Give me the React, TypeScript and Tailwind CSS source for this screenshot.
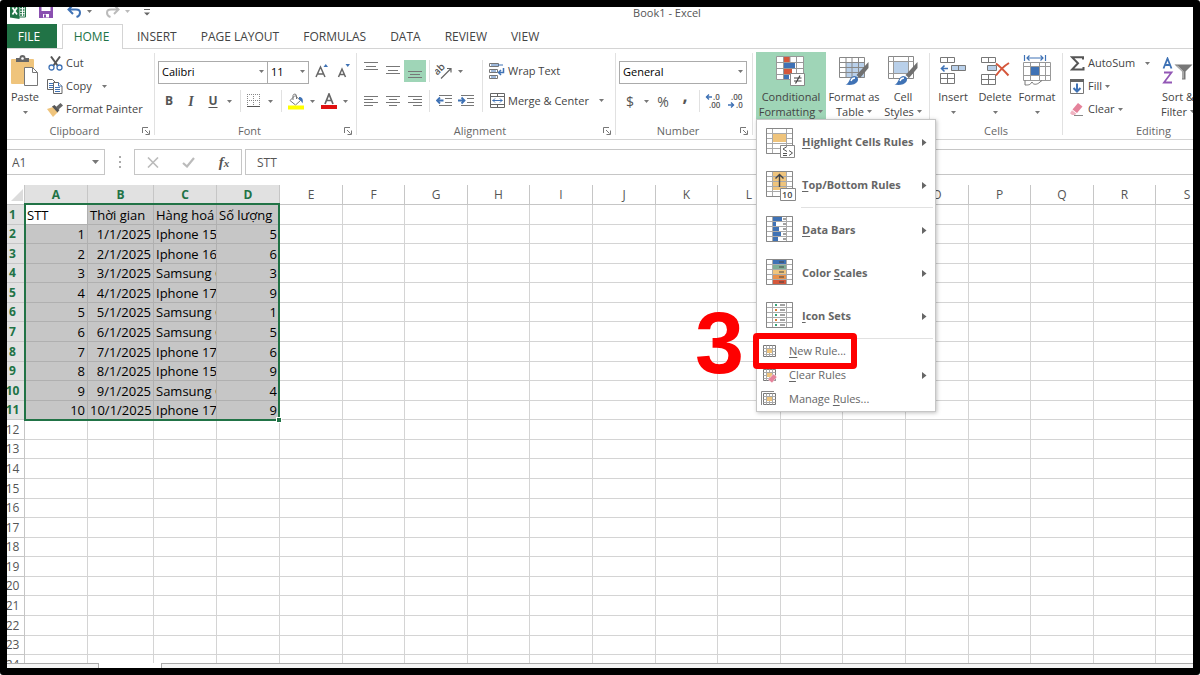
import type { ReactNode } from 'react';

type Children = { children: ReactNode };

const TABS = ['INSERT', 'PAGE LAYOUT', 'FORMULAS', 'DATA', 'REVIEW', 'VIEW'];

const COLUMNS = 'ABCDEFGHIJKLMNOPQRSTUVWXYZ'.split('');

const DATA: string[][] = [
  ['STT', 'Thời gian', 'Hàng hoá', 'Số lượng'],
  ['1', '1/1/2025', 'Iphone 15', '5'],
  ['2', '2/1/2025', 'Iphone 16', '6'],
  ['3', '3/1/2025', 'Samsung G', '3'],
  ['4', '4/1/2025', 'Iphone 17', '9'],
  ['5', '5/1/2025', 'Samsung G', '1'],
  ['6', '6/1/2025', 'Samsung G', '5'],
  ['7', '7/1/2025', 'Iphone 17', '6'],
  ['8', '8/1/2025', 'Iphone 15', '9'],
  ['9', '9/1/2025', 'Samsung G', '4'],
  ['10', '10/1/2025', 'Iphone 17', '9'],
];

const ROWS = Array.from({ length: 40 }, (_, i) => i);

function columnWidth(index: number) {
  if (index === 1) return 'w-[66px]';
  if (index < 4) return 'w-[63px]';
  return (index - 4) % 5 % 2 === 0 ? 'w-[63px]' : 'w-[62px]';
}

function rowHeight(index: number) {
  return index % 7 % 2 === 0 ? 'h-5' : 'h-[19px]';
}

/* ---------- small parts ---------- */

function Caret({ className = 'text-[#777]' }: { className?: string }) {
  return (
    <svg width="5" height="3" viewBox="0 0 5 3" className={`shrink-0 ${className}`} aria-hidden="true">
      <path d="M0 0h5L2.5 3z" fill="currentColor" />
    </svg>
  );
}

function CaretButton({ label, className = 'w-[11px]' }: { label: string; className?: string }) {
  return (
    <button type="button" aria-label={label} className={`flex h-[22px] shrink-0 items-center justify-center ${className}`}>
      <Caret />
    </button>
  );
}

function IconButton({ label, className = '', children }: Children & { label: string; className?: string }) {
  return (
    <button type="button" aria-label={label} className={`flex h-[22px] w-[22px] shrink-0 items-center justify-center ${className}`}>
      {children}
    </button>
  );
}

function Divider({ className = 'mx-[3px]' }: { className?: string }) {
  return <span className={`w-px shrink-0 self-stretch bg-[#e1e1e1] ${className}`} />;
}

function Group({ label, width, launcher, children }: Children & { label: string; width: string; launcher?: boolean }) {
  return (
    <section aria-label={label} className={`my-1 flex shrink-0 flex-col border-r border-[#e1e1e1] ${width}`}>
      <div className="flex h-[73px] shrink-0">{children}</div>
      <div className="flex h-[9px] items-center">
        <span className="flex-1 text-center text-[11px] leading-4 text-[#666]">{label}</span>
        {launcher && (
          <button type="button" aria-label={`${label} settings`} className="mr-1 w-2">
            <svg width="8" height="8" viewBox="0 0 8 8" fill="none" stroke="#777">
              <path d="M.5 6V.5H6M3 3l3.5 3.5M7.500 3.500v4h-4" />
            </svg>
          </button>
        )}
      </div>
    </section>
  );
}

function Combo({ label, value, width }: { label: string; value: string; width: string }) {
  return (
    <div className={`relative ${width}`}>
      <select aria-label={label} className="h-[23px] w-full appearance-none border border-[#ababab] bg-white pl-[3px] text-[11px] text-black">
        <option>{value}</option>
      </select>
      <span className="pointer-events-none absolute inset-y-0 right-1 flex items-center">
        <Caret />
      </span>
    </div>
  );
}

function BigButton({ icon, lines, caretBelow, className = '' }: { icon: ReactNode; lines: string[]; caretBelow?: boolean; className?: string }) {
  return (
    <button type="button" className={`-mt-px flex h-[69px] shrink-0 flex-col items-center text-[11px] leading-[15px] whitespace-nowrap ${className}`}>
      <span className="flex h-[37px] items-center">{icon}</span>
      {lines.map((line, i) => (
        <span key={line} className="flex items-center gap-[3px]">
          {line}
          {!caretBelow && i === lines.length - 1 && <Caret />}
        </span>
      ))}
      {caretBelow && (
        <span className="flex h-4 items-center">
          <Caret />
        </span>
      )}
    </button>
  );
}

function SmallButton({ icon, label, caret = '' }: { icon: ReactNode; label: string; caret?: string }) {
  return (
    <button type="button" className="flex h-[23px] items-center text-[11px] whitespace-nowrap">
      <span className="mr-[3px] flex w-4 justify-center">{icon}</span>
      {label}
      {caret && <Caret className={`text-[#777] ${caret}`} />}
    </button>
  );
}

/* ---------- ribbon icons ---------- */

function PasteIcon() {
  return (
    <svg width="30" height="32" viewBox="0 0 30 32">
      <rect x="1" y="4" width="23" height="25" rx="1" fill="#efc47c" />
      <path d="M6 3h3.500a3 3 0 0 1 6 0H19v4H6z" fill="#666" />
      <circle cx="12.500" cy="3.500" r="1.300" fill="#fff" />
      <path d="M14.500 12.500h8l5 5v13h-13z" fill="#fff" stroke="#777" />
      <path d="M22.500 12.500v5h5" fill="none" stroke="#777" />
    </svg>
  );
}

function CutIcon() {
  return (
    <svg width="15" height="15" viewBox="0 0 15 15" fill="none">
      <path d="M3 .5l6.500 9M12 .5l-6.500 9" stroke="#555" strokeWidth="2" />
      <circle cx="3.500" cy="11.500" r="2.500" stroke="#3f72b5" strokeWidth="1.300" />
      <circle cx="11.500" cy="11.500" r="2.500" stroke="#3f72b5" strokeWidth="1.300" />
    </svg>
  );
}

function CopyIcon() {
  return (
    <svg width="16" height="15" viewBox="0 0 16 15" fill="#fff" stroke="#666">
      <path d="M.5.5h5l3 3v7h-8z" />
      <path d="M2 4.500h4M2 6.500h4M2 8.500h4" stroke="#3f72b5" />
      <path d="M6.500 3.500h5l3.500 3.500v7.500H6.500z" />
      <path d="M11.500 3.500V7H15M8 8.500h5M8 10.500h5M8 12.500h5" stroke="#3f72b5" />
    </svg>
  );
}

function PainterIcon() {
  return (
    <svg width="16" height="14" viewBox="0 0 16 14">
      <path d="M0 6l6-2 5 5-5 5z" fill="#efc47c" />
      <path d="M5 3.500L7.500 2l5 5-2 2.500z" fill="#555" />
      <path d="M9 4l4.500-4L16 2.500 11.500 6.500z" fill="#666" />
    </svg>
  );
}

function GrowFontIcon({ small }: { small?: boolean }) {
  return (
    <svg width="14" height="16" viewBox="0 0 14 16">
      <path d={small ? 'M1.500 14L5 6l3.500 8M2.700 11.500h4.600' : 'M1 14L5.500 4 10 14M2.700 11h5.600'} fill="none" stroke="#666" strokeWidth="1.500" />
      <path d={small ? 'M8.500 1H13l-2.250 3z' : 'M8.500 4H13l-2.250-3z'} fill="#3f72b5" />
    </svg>
  );
}

function BordersIcon() {
  return (
    <svg width="14" height="14" viewBox="0 0 14 14" fill="none" stroke="#888">
      <path d="M.5 0v12M12.500 0v12M6.500 0v12M0 .5h13M0 6.500h13" strokeDasharray="1 1" />
      <path d="M0 12.500h13" stroke="#555" />
    </svg>
  );
}

function FillColorIcon() {
  return (
    <svg width="18" height="17" viewBox="0 0 18 17">
      <path d="M3 7.500L8 2.500l5.500 5-5 4.500z" fill="#fff" stroke="#777" />
      <path d="M6 7V2.500a1.800 1.800 0 0 1 3.500 0V6" fill="none" stroke="#777" />
      <path d="M12 4c3.500 0 4.500 2.500 3.500 6.500C14.500 8.500 14 7.500 12 6.500z" fill="#3f72b5" />
      <rect x="1" y="12.500" width="16" height="4" fill="#ffff00" />
    </svg>
  );
}

function FontColorIcon() {
  return (
    <svg width="16" height="16" viewBox="0 0 16 16">
      <path d="M4 11L8 1l4 10M5.300 7.500h5.400" fill="none" stroke="#666" strokeWidth="1.700" />
      <rect y="12" width="16" height="4" fill="#e01010" />
    </svg>
  );
}

const ALIGN_PATHS = {
  top: 'M0 2.500h14M2 6.500h10M0 9.500h14',
  middle: 'M0 6.500h14M2 10.500h10M0 13.500h14',
  bottom: 'M0 11.500h14M2 14.500h10M0 17.500h14',
  left: 'M0 6.500h14M0 9.500h9M0 12.500h14M0 15.500h9',
  center: 'M0 6.500h14M3 9.500h8M0 12.500h14M3 15.500h8',
  right: 'M0 6.500h14M5 9.500h9M0 12.500h14M5 15.500h9',
};

function AlignIcon({ kind }: { kind: keyof typeof ALIGN_PATHS }) {
  return (
    <svg width="14" height="22" viewBox="0 0 14 22" stroke="#777">
      <path d={ALIGN_PATHS[kind]} />
    </svg>
  );
}

function OrientationIcon() {
  return (
    <svg width="18" height="18" viewBox="0 0 18 18">
      <text x="1" y="11" transform="rotate(-45 5 11)" fontSize="10" fontWeight="600" fill="#555">ab</text>
      <path d="M6 16.500l10-10M12 6.500h4v4" fill="none" stroke="#666" strokeWidth="1.200" />
    </svg>
  );
}

function IndentIcon({ increase }: { increase?: boolean }) {
  return (
    <svg width="16" height="12" viewBox="0 0 16 12" fill="none">
      <path d="M3 .5h13M9 3.500h7M9 7.500h7M3 10.500h13" stroke="#777" />
      <path d={increase ? 'M0 5.500h6M3.500 2.500l3 3-3 3' : 'M1 5.500h6.500M4 2.500l-3 3 3 3'} stroke="#3f72b5" strokeWidth="1.800" />
    </svg>
  );
}

function WrapIcon() {
  return (
    <svg width="16" height="16" viewBox="0 0 16 16" fill="none">
      <path d="M.5.5h9v3h-9zM.5 6.500h8v3h-8zM.5 12.500h8v3h-8z" stroke="#777" />
      <path d="M2 2h12M2 8h5M2 14h5" stroke="#3f72b5" />
      <path d="M14.500 5v4.500H10M12 7l-2.500 2.500L12 12" stroke="#3f72b5" strokeWidth="1.500" />
    </svg>
  );
}

function MergeIcon() {
  return (
    <svg width="15" height="15" viewBox="0 0 15 15" fill="none">
      <path d="M.5.5h14v14H.5zM.5 3.500h14M.5 11.500h14M7.500.5v3M7.500 11.500v3" stroke="#666" />
      <path d="M2.500 7.500h10M5 5.500l-2 2 2 2M10 5.500l2 2-2 2" stroke="#3f72b5" />
    </svg>
  );
}

function DecimalIcon({ increase }: { increase?: boolean }) {
  return (
    <svg width="18" height="16" viewBox="0 0 18 16" fontSize="8" fontWeight="600" fill="#555">
      <text x={increase ? 8 : 4} y="7">{increase ? '.0' : '.00'}</text>
      <text x={increase ? 4 : 9} y="15">{increase ? '.00' : '.0'}</text>
      <path d={increase ? 'M1 4h6M4 1.500L1.500 4 4 6.500' : 'M1 12h6M4 9.500L6.500 12 4 14.500'} fill="none" stroke="#3f72b5" strokeWidth="1.400" />
    </svg>
  );
}

function ConditionalIcon() {
  return (
    <svg width="30" height="30" viewBox="0 0 30 30">
      <path d="M.5.500h27v23H.5z" fill="#fff" />
      <path d="M8 1h6v5.500H8zM8 12.500h8v5.500H8z" fill="#d5573b" />
      <path d="M8 6.500h11v6H8zM8 18h5v5.500H8z" fill="#3f72b5" />
      <path d="M.5.500h27v23H.5zM7.500.500v23M14 .500v6M20.500.500v23M.5 6.500h27M.5 12.500h27M.5 18.500h27" fill="none" stroke="#999" />
      <path d="M14.500 17.500h14v12h-14z" fill="#fff" stroke="#888" />
      <path d="M18 22h7.500M18 25h7.500M24 19.500l-4.500 8" stroke="#444" strokeWidth="1.200" />
    </svg>
  );
}

function Brush() {
  return (
    <>
      <path d="M29.500 6v6l-8.500 10-3.500-3z" fill="#707070" />
      <path d="M6.500 28.500c4.500-1 3-7 8.500-8.500 3.500 0 5 3 3.500 5.500-2 3.500-8 4-12 3z" fill="#3f72b5" />
      <path d="M12 25c.5-2 2-3 4-3" stroke="#fff" strokeWidth="1.300" fill="none" />
    </>
  );
}

function FormatTableIcon() {
  return (
    <svg width="30" height="30" viewBox="0 0 30 30">
      <path d="M.5 1.500h25v20H.5z" fill="#fff" />
      <path d="M7 7h19v15H7z" fill="#b9d0ea" />
      <path d="M.5 1.500h25v20H.5zM7 1.500v20M13 1.500v20M19.500 1.500v20M.5 6.500h25M.5 11.500h25M.5 16.500h25" fill="none" stroke="#888" />
      <Brush />
    </svg>
  );
}

function CellStylesIcon() {
  return (
    <svg width="30" height="30" viewBox="0 0 30 30">
      <path d="M.5.500h25v22H.5z" fill="#fff" stroke="#888" />
      <path d="M6 6h15v11H6z" fill="#b9d0ea" />
      <path d="M5.500.500v22M20.500.500v22M.5 5.500h25M.5 17.500h25" fill="none" stroke="#999" />
      <Brush />
    </svg>
  );
}

function InsertIcon() {
  return (
    <svg width="28" height="28" viewBox="0 0 28 28" fill="#fff" stroke="#777">
      <path d="M1.500.500h14v5h-14zM8.500.500v5M1.500 16.500h14v10h-14zM8.500 16.500v10M1.500 21.500h14" />
      <path d="M12.500 8.500h14v5h-14zM19.500 8.500v5" fill="#b9d0ea" />
      <path d="M9 11.500H3M5.500 8.500l-3 3 3 3" fill="none" stroke="#3f72b5" strokeWidth="1.600" />
    </svg>
  );
}

function DeleteIcon() {
  return (
    <svg width="30" height="28" viewBox="0 0 30 28" fill="#fff" stroke="#777">
      <path d="M1.500.500h14v5h-14zM8.500.500v5M1.500 17.500h14v10h-14zM8.500 17.500v10M1.500 22.500h14" />
      <path d="M7.500 8.500h9v5h-9z" fill="#b9d0ea" />
      <path d="M16 6.500c4 3 8 7 12.500 12M29 6c-5 3-9 7-13 12.500" fill="none" stroke="#d5573b" strokeWidth="2" />
    </svg>
  );
}

function FormatIcon() {
  return (
    <svg width="28" height="31" viewBox="0 0 28 31" fill="none">
      <path d="M1.500 0v6M22.500 0v6M4 3h16M6.500.500L4 3l2.500 2.500M17.500.500L20 3l-2.500 2.500" stroke="#3f72b5" strokeWidth="1.200" />
      <path d="M.5 7.500h27v18H.5z" fill="#fff" />
      <path d="M8 11.500h8v9H8z" fill="#3f72b5" />
      <path d="M.5 7.500h27v18H.5zM7.500 7.500v18M16.500 7.500v18M22.500 7.500v18M.5 11.500h27M.5 20.500h27" stroke="#999" />
      <path d="M2 25.500v4.500c4 0 5 0 7-3 1 3 5 3 8 0l2-1.500" stroke="#777" />
    </svg>
  );
}

function SigmaIcon() {
  return (
    <svg width="15" height="15" viewBox="0 0 15 15">
      <path d="M13 3.500V1.200H2L8 7.200 2 13.500h11.500V11" fill="none" stroke="#555" strokeWidth="2" />
    </svg>
  );
}

function FillDownIcon() {
  return (
    <svg width="14" height="15" viewBox="0 0 14 15">
      <path d="M.5.5h13v14H.5z" fill="#fff" stroke="#777" />
      <path d="M0 0h14v3H0z" fill="#666" />
      <path d="M7 4.500v8M3.500 9L7 12.500 10.500 9" fill="none" stroke="#3f72b5" strokeWidth="2" />
    </svg>
  );
}

function EraserIcon() {
  return (
    <svg width="14" height="13" viewBox="0 0 14 13">
      <path d="M8 0l4.500 3.500L7 10 2.500 6.500z" fill="#e5839b" />
      <path d="M2 7.200l4.300 3.400L5 12H2L0 10.200z" fill="#f0b4c2" />
      <path d="M4 12.500h9" stroke="#888" />
    </svg>
  );
}

function SortFilterIcon() {
  return (
    <svg width="32" height="28" viewBox="0 0 32 28" fill="none">
      <path d="M1.500 11.500L5.500 1.500l4 10M3 8h5" stroke="#3f72b5" strokeWidth="1.800" />
      <path d="M2 15.500h7.500L2 25.500h8" stroke="#9257b5" strokeWidth="1.800" />
      <path d="M12.500 7.500h18l-7 7v8H20v-8z" fill="#777" />
      <path d="M15 8.500l6 6v7" stroke="#ddd" />
    </svg>
  );
}

/* ---------- menu icons ---------- */

const GRID_LINES = 'M.5.500h26v25H.5zM6.500.500v25M20.500.500v25M.5 5.500h26M.5 10.500h26M.5 15.500h26M.5 20.500h26';

function RuleGrid({ under, over }: { under?: ReactNode; over?: ReactNode }) {
  return (
    <svg width="30" height="30" viewBox="0 0 30 30" className="shrink-0">
      <path d="M.5.500h26v25H.5z" fill="#fff" />
      {under}
      <path d={GRID_LINES} fill="none" stroke="#aaa" />
      <path d="M.5.500h26v25H.5z" fill="none" stroke="#888" />
      {over}
    </svg>
  );
}

const highlightIcon = (
  <RuleGrid
    over={
      <>
        <path d="M7 6h13v8H7z" fill="#efc47c" />
        <path d="M14.500 17.500h14v12h-14z" fill="#fff" stroke="#888" />
        <path d="M21 18.500l-4 2.500 4 2.500M17 25.500h4M17 27.500h4M23 22.500l3.500 2.500-3.500 2.500" fill="none" stroke="#555" />
      </>
    }
  />
);

const topBottomIcon = (
  <RuleGrid
    under={<path d="M7 1h13v18H7z" fill="#efc47c" />}
    over={
      <>
        <path d="M13.500 4v12M9.500 7.500l4-4 4 4" fill="none" stroke="#444" strokeWidth="1.400" />
        <path d="M14.500 17.500h15v12h-15z" fill="#fff" stroke="#888" />
        <text x="16" y="27" fontSize="9" fontWeight="600" fill="#444">10</text>
      </>
    }
  />
);

const dataBarsIcon = (
  <RuleGrid
    under={<path d="M7 1h9v4.500H7zM7 5.500h3v5H7zM7 10.500h6v5H7zM7 15.500h8v5H7zM7 20.500h5v5H7z" fill="#3f72b5" />}
    over={<path d="M17 3h3M17 8h3M17 13h3M17 18h3M17 23h3" stroke="#444" />}
  />
);

const colorScalesIcon = (
  <RuleGrid
    under={
      <>
        <path d="M7 1h13v5H7z" fill="#3f72b5" />
        <path d="M7 6h13v5H7z" fill="#7fae96" />
        <path d="M7 11h13v5H7z" fill="#efc47c" />
        <path d="M7 16h13v5H7z" fill="#e8924c" />
        <path d="M7 21h13v4H7z" fill="#d5573b" />
      </>
    }
    over={<path d="M13 3h5M13 8h5M13 13h5M13 18h5M13 23h5" stroke="#444" />}
  />
);

const iconSetsIcon = (
  <RuleGrid
    over={
      <>
        <path d="M9 2h2v2H9zM9 12h2v2H9zM9 22h2v2H9z" fill="#3aa37a" />
        <path d="M9 7h2v2H9zM9 17h2v2H9z" fill="#d97a35" />
        <path d="M14 3h5M14 8h5M14 13h5M14 18h5M14 23h5" stroke="#444" />
      </>
    }
  />
);

function SmallRuleIcon({ kind }: { kind: 'new' | 'clear' | 'manage' }) {
  return (
    <svg width="16" height="16" viewBox="0 0 16 16" className="shrink-0">
      {kind === 'manage' && <path d="M.5 14V.5H13" fill="none" stroke="#888" />}
      <path d="M2.500 2.500h12v11h-12z" fill="#fff" stroke="#777" />
      <path d="M5.500 2.500v11M8.500 2.500v11M11.500 2.500v11M2.500 5.500h12M2.500 8.500h12M2.500 11.500h12" fill="none" stroke="#aaa" />
      <path d="M6 6h5v4H6z" fill="#efc47c" />
      {kind === 'clear' && <path d="M12.500 7L16 10l-5 6-4-3.500z" fill="#e5839b" stroke="#fff" strokeWidth=".5" />}
    </svg>
  );
}

/* ---------- menu ---------- */

// `hotkey` is the position of the underlined letter
function MenuLabel({ text, hotkey }: { text: string; hotkey: number }) {
  return (
    <span className="flex-1 text-left whitespace-pre">
      {text.slice(0, hotkey)}
      <u className="underline-offset-2">{text[hotkey]}</u>
      {text.slice(hotkey + 1)}
    </span>
  );
}

function MenuItem({ icon, text, hotkey = 0, big, arrow }: { icon: ReactNode; text: string; hotkey?: number; big?: boolean; arrow?: boolean }) {
  return (
    <button
      type="button"
      role="menuitem"
      className={big
        ? 'flex h-[43px] w-full items-center gap-1.5 pr-2 pl-[9px] text-[11px] font-bold text-[#666]'
        : 'flex h-6 w-full items-center gap-3 pr-2 pl-1 text-[11px] text-[#666]'}
    >
      {icon}
      <MenuLabel text={text} hotkey={hotkey} />
      {arrow && (
        <svg width="5" height="7" viewBox="0 0 5 7">
          <path d="M0 0l4.500 3.500L0 7z" fill="#666" />
        </svg>
      )}
    </button>
  );
}

function FormattingMenu() {
  return (
    <div role="menu" className="absolute top-full left-0 z-20 w-[180px] border border-[#c6c6c6] bg-white pt-px shadow-[1px_1px_4px_rgba(0,0,0,0.25)]">
      <MenuItem big arrow icon={highlightIcon} text="Highlight Cells Rules" />
      <MenuItem big arrow icon={topBottomIcon} text="Top/Bottom Rules" />
      <div className="mr-0.5 mb-px ml-[44px] h-px bg-[#e1e1e1]" />
      <MenuItem big arrow icon={dataBarsIcon} text="Data Bars" />
      <MenuItem big arrow icon={colorScalesIcon} text="Color Scales" hotkey={6} />
      <MenuItem big arrow icon={iconSetsIcon} text="Icon Sets" />
      <div className="mr-0.5 ml-[30px] h-px bg-[#e1e1e1]" />
      <div className="relative">
        <MenuItem icon={<SmallRuleIcon kind="new" />} text="New Rule..." />
        <div className="pointer-events-none absolute -top-1.5 -left-1 h-9 w-[104px] rounded-sm border-6 border-[#fe0000]" />
        <span className="pointer-events-none absolute -top-10 -left-[62px] font-['Liberation_Sans',Arial,sans-serif] text-[88px] leading-[88px] font-bold text-[#fe0000]">3</span>
      </div>
      <MenuItem arrow icon={<SmallRuleIcon kind="clear" />} text="Clear Rules" />
      <MenuItem icon={<SmallRuleIcon kind="manage" />} text="Manage Rules..." hotkey={7} />
    </div>
  );
}

/* ---------- page sections ---------- */

function TitleBar() {
  return (
    <header className="relative flex h-[17px] shrink-0 items-start">
      <div className="-mt-[7px] flex items-center pl-[3px]">
        <svg width="16" height="16" viewBox="0 0 16 16" aria-label="Excel">
          <path d="M8 2h7.500v12H8z" fill="#fff" stroke="#217346" />
          <path d="M10 4.500h2M13 4.500h1.500M10 7h2M13 7h1.500M10 9.500h2M13 9.500h1.500M10 12h2M13 12h1.500" stroke="#217346" strokeWidth="1.300" />
          <path d="M0 1.500L9.500 0v16L0 14.500z" fill="#217346" />
          <path d="M2.500 4.500l4.500 7M7 4.500l-4.500 7" stroke="#fff" strokeWidth="1.700" />
        </svg>
        <button type="button" aria-label="Save" className="ml-[13px]">
          <svg width="14" height="14" viewBox="0 0 14 14">
            <path d="M0 0h14v14H0z" fill="#8a4fb0" />
            <path d="M2.500 1h9v6h-9zM4 10h6v3.500H4z" fill="#fff" />
            <path d="M5 10.500h2v3H5z" fill="#8a4fb0" />
          </svg>
        </button>
        <button type="button" aria-label="Undo" className="ml-[14px]">
          <svg width="15" height="14" viewBox="0 0 15 14" fill="none" stroke="#3f72b5" strokeWidth="2">
            <path d="M2 5.500h7c5.500 0 5 6 .5 7.500M6 1L1.500 5.500 6 10" />
          </svg>
        </button>
        <CaretButton label="Undo history" className="w-[14px]" />
        <button type="button" aria-label="Redo" className="ml-[9px]">
          <svg width="15" height="14" viewBox="0 0 15 14" fill="none" stroke="#bbb" strokeWidth="2">
            <path d="M13 5.500H6c-5.500 0-5 6-.5 7.500M9 1l4.500 4.500L9 10" />
          </svg>
        </button>
        <CaretButton label="Redo history" className="w-[14px] opacity-50" />
        <button type="button" aria-label="Customize toolbar" className="ml-[10px] pt-[3px]">
          <svg width="6" height="7" viewBox="0 0 6 7" fill="#666">
            <path d="M0 0h6v1H0zM0 3.500h6L3 6.500z" />
          </svg>
        </button>
      </div>
      <h1 className="absolute inset-x-0 -top-0.5 pl-[134px] text-center text-[11px] leading-4 text-[#555]">Book1 - Excel</h1>
    </header>
  );
}

function TabBar() {
  return (
    <nav className="flex h-[25px] shrink-0 border-b border-[#d4d4d4] text-[12px] text-[#444]">
      <button type="button" className="w-[50px] bg-[#217346] pt-0.5 pr-1.5 text-white">FILE</button>
      <button type="button" className="-mb-px ml-[5px] h-[25px] w-[61px] border border-b-0 border-[#d4d4d4] bg-white pr-0.5 text-[#217346]">HOME</button>
      <div className="flex pl-0.5">
        {TABS.map((tab) => (
          <button key={tab} type="button" className="px-3 pt-0.5 whitespace-nowrap">{tab}</button>
        ))}
      </div>
    </nav>
  );
}

function Ribbon() {
  return (
    <div className="flex h-[91px] shrink-0 border-b border-[#d4d4d4] text-[#444]">
      <Group label="Clipboard" width="w-[148px]" launcher>
        <BigButton icon={<PasteIcon />} lines={['Paste']} caretBelow className="w-9" />
        <div className="-mt-px flex flex-col items-start pl-1">
          <SmallButton icon={<CutIcon />} label="Cut" />
          <SmallButton icon={<CopyIcon />} label="Copy" caret="ml-[10px]" />
          <SmallButton icon={<PainterIcon />} label="Format Painter" />
        </div>
      </Group>

      <Group label="Font" width="w-[202px]" launcher>
        <div className="flex flex-col gap-2 pt-[7px] pl-[3px]">
          <div className="flex h-[22px] items-center">
            <Combo label="Font" value="Calibri" width="w-[110px]" />
            <Combo label="Font size" value="11" width="-ml-px w-[42px]" />
            <IconButton label="Increase font size" className="ml-0.5"><GrowFontIcon /></IconButton>
            <IconButton label="Decrease font size"><GrowFontIcon small /></IconButton>
          </div>
          <div className="flex h-[22px] items-center text-[12px] text-[#555]">
            <IconButton label="Bold"><b>B</b></IconButton>
            <IconButton label="Italic"><i className="font-['Liberation_Serif',serif] text-[14px] font-bold">I</i></IconButton>
            <IconButton label="Underline"><u className="font-bold underline-offset-2">U</u></IconButton>
            <CaretButton label="Underline style" />
            <Divider className="mx-[5px]" />
            <IconButton label="Borders" className="-mx-[3px]"><BordersIcon /></IconButton>
            <CaretButton label="Border style" className="w-4" />
            <Divider />
            <IconButton label="Fill color"><FillColorIcon /></IconButton>
            <CaretButton label="Fill colors" />
            <IconButton label="Font color"><FontColorIcon /></IconButton>
            <CaretButton label="Font colors" />
          </div>
        </div>
      </Group>

      <Group label="Alignment" width="w-[259px]" launcher>
        <div className="flex h-[59px] pt-[7px] pl-[3px]">
          <div className="flex flex-col gap-2">
            <div className="flex h-[22px]">
              <IconButton label="Top align"><AlignIcon kind="top" /></IconButton>
              <IconButton label="Middle align"><AlignIcon kind="middle" /></IconButton>
              <IconButton label="Bottom align" className="bg-[#9fd5b7]"><AlignIcon kind="bottom" /></IconButton>
              <Divider />
              <IconButton label="Orientation"><OrientationIcon /></IconButton>
              <CaretButton label="Orientation options" />
            </div>
            <div className="flex h-[22px]">
              <IconButton label="Align left"><AlignIcon kind="left" /></IconButton>
              <IconButton label="Center"><AlignIcon kind="center" /></IconButton>
              <IconButton label="Align right"><AlignIcon kind="right" /></IconButton>
              <Divider />
              <IconButton label="Decrease indent"><IndentIcon /></IconButton>
              <IconButton label="Increase indent"><IndentIcon increase /></IconButton>
            </div>
          </div>
          <Divider className="mr-1.5 ml-[5px]" />
          <div className="flex flex-col items-start gap-[7px]">
            <SmallButton icon={<WrapIcon />} label="Wrap Text" />
            <SmallButton icon={<MergeIcon />} label="Merge & Center" caret="ml-[10px]" />
          </div>
        </div>
      </Group>

      <Group label="Number" width="w-[137px]" launcher>
        <div className="flex flex-col gap-2 pt-[7px] pl-[3px]">
          <div className="flex h-[22px] items-center">
            <Combo label="Number format" value="General" width="w-32" />
          </div>
          <div className="flex h-[22px] items-center text-[14px] text-[#555]">
            <IconButton label="Accounting format">$</IconButton>
            <CaretButton label="Currencies" />
            <IconButton label="Percent style">%</IconButton>
            <IconButton label="Comma style"><b className="-mt-3 text-[18px] leading-[18px]">,</b></IconButton>
            <Divider />
            <IconButton label="Increase decimal"><DecimalIcon increase /></IconButton>
            <IconButton label="Decrease decimal"><DecimalIcon /></IconButton>
          </div>
        </div>
      </Group>

      <Group label="Styles" width="w-[177px]">
        <div className="pl-[3px]">
          <div className="relative h-[67px]">
            <BigButton icon={<ConditionalIcon />} lines={['Conditional', 'Formatting']} className="w-[70px] bg-[#9fd5b7]" />
            <FormattingMenu />
          </div>
        </div>
        <BigButton icon={<FormatTableIcon />} lines={['Format as', 'Table']} className="w-[56px]" />
        <BigButton icon={<CellStylesIcon />} lines={['Cell', 'Styles']} className="w-[42px]" />
      </Group>

      <Group label="Cells" width="w-[133px]">
        <div className="flex pl-0.5">
          <BigButton icon={<InsertIcon />} lines={['Insert']} caretBelow className="w-[42px]" />
          <BigButton icon={<DeleteIcon />} lines={['Delete']} caretBelow className="w-[42px]" />
          <BigButton icon={<FormatIcon />} lines={['Format']} caretBelow className="w-[42px]" />
        </div>
      </Group>

      <Group label="Editing" width="w-[182px]">
        <div className="-mt-px flex w-[91px] flex-col items-start pl-1.5">
          <SmallButton icon={<SigmaIcon />} label="AutoSum" caret="ml-[10px]" />
          <SmallButton icon={<FillDownIcon />} label="Fill" caret="ml-[3px]" />
          <SmallButton icon={<EraserIcon />} label="Clear" caret="ml-[3px]" />
        </div>
        <BigButton icon={<SortFilterIcon />} lines={['Sort &', 'Filter']} className="w-12" />
      </Group>
    </div>
  );
}

function FormulaBar() {
  return (
    <div className="flex h-[45px] shrink-0 items-start pt-[9px] text-[12px] text-[#555]">
      <div className="relative w-[98px]">
        <input aria-label="Name box" defaultValue="A1" className="h-[26px] w-full border border-l-0 border-[#c6c6c6] pl-[5px]" />
        <span className="pointer-events-none absolute inset-y-0 right-1.5 flex items-center">
          <svg width="7" height="4" viewBox="0 0 7 4"><path d="M0 0h7L3.500 4z" fill="#777" /></svg>
        </span>
      </div>
      <span className="flex h-[26px] w-[29px] items-center justify-center">
        <svg width="2" height="12" viewBox="0 0 2 12" fill="#aaa">
          <path d="M0 0h2v2H0zM0 5h2v2H0zM0 10h2v2H0z" />
        </svg>
      </span>
      <div className="flex h-[26px] w-[108px] items-center justify-around border border-[#c6c6c6]">
        <button type="button" aria-label="Cancel">
          <svg width="12" height="11" viewBox="0 0 12 11" stroke="#bbb" strokeWidth="1.600"><path d="M1 .5l10 10M11 .5L1 10.500" /></svg>
        </button>
        <button type="button" aria-label="Enter">
          <svg width="13" height="11" viewBox="0 0 13 11" fill="none" stroke="#bbb" strokeWidth="2.200"><path d="M1 6l4 3.500L12 1" /></svg>
        </button>
        <button type="button" aria-label="Insert function" className="font-['Liberation_Serif',serif] text-[15px] font-bold italic">
          f<span className="text-[11px]">x</span>
        </button>
      </div>
      <input aria-label="Formula" defaultValue="STT" className="ml-[3px] h-[26px] min-w-0 flex-1 border border-r-0 border-[#c6c6c6] pl-[11px]" />
    </div>
  );
}

function Sheet() {
  return (
    <main className="relative min-h-0 flex-1 overflow-hidden">
      <table className="w-px table-fixed border-separate border-spacing-0">
        <colgroup>
          <col className="w-[18px]" />
          {COLUMNS.map((name, i) => <col key={name} className={columnWidth(i)} />)}
        </colgroup>
        <thead>
          <tr className="h-5">
            <th className="border-r border-b border-[#c6c6c6] p-0">
              <svg width="12" height="12" viewBox="0 0 12 12" className="ml-1" aria-hidden="true"><path d="M12 0v12H0z" fill="#dcdcdc" /></svg>
            </th>
            {COLUMNS.map((name, i) => (
              <th
                key={name}
                scope="col"
                className={`border-r border-b border-[#c6c6c6] p-0 text-[12px] leading-4 ${i < 4 ? 'bg-[#e1e1e1] font-bold text-[#217346]' : 'font-normal text-[#555]'}`}
              >
                {name}
              </th>
            ))}
          </tr>
        </thead>
        <tbody>
          {ROWS.map((row) => (
            <tr key={row} className={rowHeight(row)}>
              <th
                scope="row"
                className={`overflow-hidden border-r border-b border-[#c6c6c6] p-0 text-[12px] leading-4 ${row < DATA.length ? 'bg-[#e1e1e1] font-bold text-[#217346]' : 'font-normal text-[#555]'}`}
              >
                <div className="flex justify-center pr-1.5"><span>{row + 1}</span></div>
              </th>
              {COLUMNS.map((name, col) => {
                const value = DATA[row]?.[col];
                if (value === undefined) return <td key={name} className="border-r border-b border-[#d4d4d4] p-0" />;
                const fill = row === 0 && col === 0 ? 'bg-white' : 'bg-[#c6c6c6]';
                const align = row > 0 && col !== 2 ? 'text-right' : 'text-left';
                return (
                  <td key={name} className={`overflow-hidden border-r border-b border-[#b0b0b0] px-0.5 py-0 text-[13px] leading-[18px] whitespace-nowrap text-black ${fill} ${align}`}>
                    {value}
                  </td>
                );
              })}
            </tr>
          ))}
        </tbody>
      </table>
      <div className="pointer-events-none absolute top-[18px] left-[17px] h-[218px] w-[256px] border-2 border-[#217346]">
        <span className="absolute -right-1 -bottom-1 size-[6px] border border-white bg-[#217346]" />
      </div>
    </main>
  );
}

export default function App() {
  return (
    <div className="flex h-screen flex-col overflow-hidden rounded-[3px] border-7 border-black bg-white font-['Open_Sans','Noto_Sans',sans-serif]">
      <TitleBar />
      <TabBar />
      <Ribbon />
      <FormulaBar />
      <Sheet />
      <footer className="flex h-[5px] shrink-0">
        <div className="w-[92px] border-t border-r border-[#ababab] bg-[#f5f5f5]" />
        <div className="w-[62px]" />
        <div className="flex-1 border-t border-l border-[#ababab] bg-[#f5f5f5]" />
      </footer>
    </div>
  );
}
